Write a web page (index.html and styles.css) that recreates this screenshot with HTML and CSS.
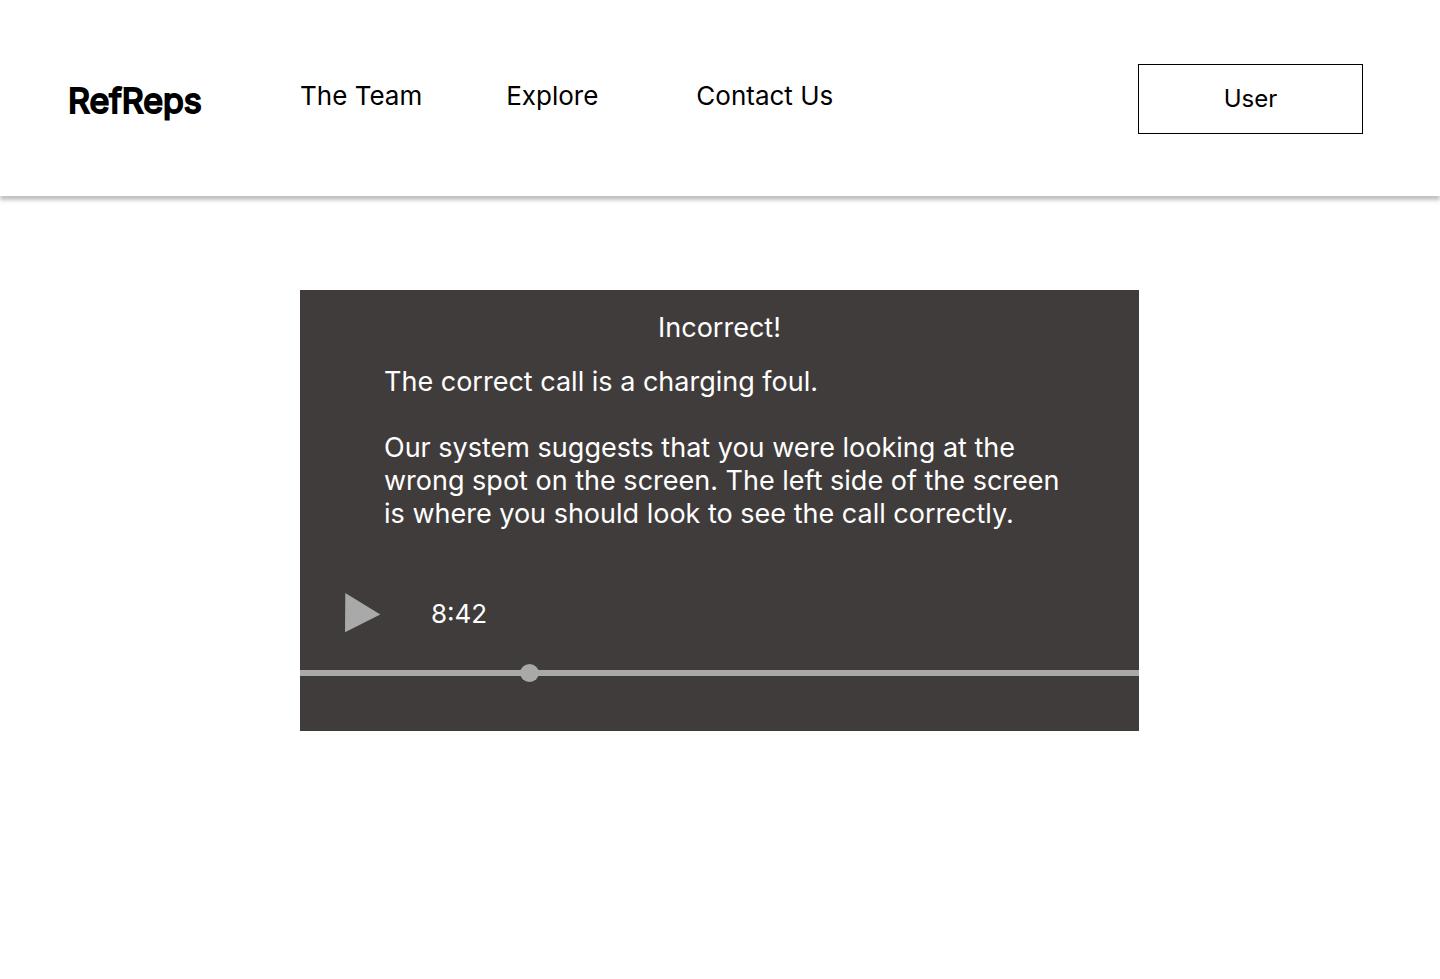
FILE: index.html
```html
<!DOCTYPE html>
<html lang="en">
<head>
<meta charset="utf-8">
<meta name="viewport" content="width=device-width, initial-scale=1">
<title>RefReps</title>
<link rel="stylesheet" href="styles.css">
</head>
<body>
<header class="site-header">
  <a class="logo" href="#">RefReps</a>
  <nav class="nav" aria-label="Main">
    <a class="nav-link" href="#">The Team</a>
    <a class="nav-link" href="#">Explore</a>
    <a class="nav-link" href="#">Contact Us</a>
  </nav>
  <button class="user-button" type="button">User</button>
</header>
<main class="content">
  <section class="player" aria-label="Video review">
    <h1 class="verdict">Incorrect!</h1>
    <div class="feedback">
      <p>The correct call is a charging foul.</p>
      <p>Our system suggests that you were looking at the wrong spot on the screen. The left side of the screen is where you should look to see the call correctly.</p>
    </div>
    <div class="controls">
      <button class="play" type="button" aria-label="Play">
        <svg class="play-icon" viewBox="0 0 36 40" aria-hidden="true"><path d="M0.300 0 35.300 21.500 0 39.200Z" fill="#a9a9a9"/></svg>
      </button>
      <span class="time">8:42</span>
    </div>
    <input class="seek" type="range" min="0" max="1000" value="268" aria-label="Seek">
  </section>
</main>
</body>
</html>
```
FILE: styles.css
```css
* {
  box-sizing: border-box;
}

body {
  margin: 0;
  background: #fff;
  color: #000;
  font-family: Inter, "Liberation Sans", sans-serif;
  font-size: 27px;
  line-height: 33px;
}

a {
  color: inherit;
  text-decoration: none;
}

button {
  color: inherit;
  font: inherit;
  cursor: pointer;
}

.site-header {
  display: flex;
  align-items: flex-start;
  min-height: 196px;
  padding: 64px 77px 62px 68px;
  box-shadow: 0 4px 4px rgba(0, 0, 0, 0.25);
}

.logo {
  width: 232px;
  padding-top: 15px;
  font-size: 34px;
  line-height: 44px;
  -webkit-text-stroke: 2px #000;
}

.nav {
  display: flex;
  flex: 1;
  padding-top: 16px;
  font-size: 26px;
  line-height: 32px;
}

.nav-link:nth-child(2) {
  margin: 0 98px 0 84px;
}

.user-button {
  width: 225px;
  height: 70px;
  padding: 0 0 2px;
  border: 1px solid #000;
  background: #fff;
  font-size: 24px;
}

.content {
  padding: 94px 25px 94px 24px;
}

.player {
  display: flex;
  flex-direction: column;
  max-width: 839px;
  margin: 0 auto;
  padding: 21px 0 48px;
  background: #403c3b;
  color: #fff;
}

.verdict {
  margin: 0;
  font-size: inherit;
  font-weight: 400;
  text-align: center;
}

.feedback {
  padding: 21px 72px 0 84px;
}

.feedback p {
  margin: 0 0 33px;
}

.controls {
  display: flex;
  align-items: center;
  gap: 50px;
  padding: 30px 45px;
}

.play {
  display: flex;
  padding: 0;
  border: 0;
  background: none;
}

.play-icon {
  width: 36px;
  height: 40px;
}

.time {
  font-size: 26px;
}

.seek {
  width: 100%;
  height: 20px;
  margin: 0;
  appearance: none;
  background: linear-gradient(#a9a9a9, #a9a9a9) center / 100% 6px no-repeat;
}

.seek::-webkit-slider-thumb {
  width: 19px;
  height: 18px;
  appearance: none;
  border-radius: 50%;
  background: #a9a9a9;
}
```
